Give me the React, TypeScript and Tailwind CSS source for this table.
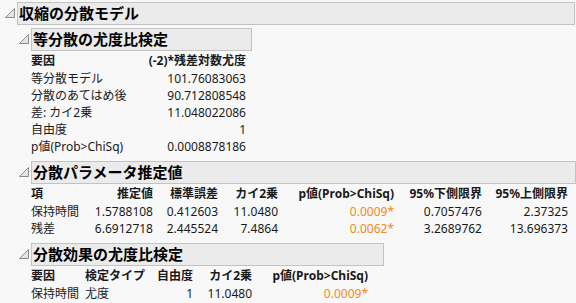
const font = { fontFamily: '"Noto Sans", "Noto Sans CJK JP", sans-serif' }

function Tri() {
  return (
    <svg width="10" height="10" viewBox="0 0 10 10" className="shrink-0 mt-[6px]">
      <polygon points="0.5,9.5 9.5,0.5 9.5,9.5" fill="#e4e4e4" stroke="#8c8c8c" strokeWidth="1" />
    </svg>
  )
}

function Header({ title, w }: { title: string; w: string }) {
  return (
    <div className="flex items-start">
      <div className="w-[13px] pl-[1px]"><Tri /></div>
      <div className={`${w} h-[23px] bg-[#ebebeb] border border-[#c3c3c3] flex items-center pl-[1px] text-[15px] font-bold text-black leading-none`}>
        {title}
      </div>
    </div>
  )
}

const orange = 'text-[#f08a24]'

export default function App() {
  return (
    <div style={font} className="w-[576px] h-[303px] bg-[#f8f8f8] text-[12px] text-[#1a1a1a] overflow-hidden pt-[2px] pl-[4px]">
      <Header title="収縮の分散モデル" w="w-[558px]" />

      <div className="pl-[14px] mt-[3px]">
        <Header title="等分散の尤度比検定" w="w-[221px]" />
        <div className="pl-[13px] pt-[1px] mb-[6px]">
          <div className="grid grid-cols-[100px_115px] leading-none">
            <div className="h-[18px] flex items-center font-bold">要因</div>
            <div className="h-[18px] flex items-center justify-end font-bold">(-2)*残差対数尤度</div>
            {[
              ['等分散モデル', '101.76083063'],
              ['分散のあてはめ後', '90.712808548'],
              ['差: カイ2乗', '11.048022086'],
              ['自由度', '1'],
              ['p値(Prob>ChiSq)', '0.0008878186'],
            ].map(([k, v]) => (
              <>
                <div key={k} className="h-[17px] flex items-center whitespace-nowrap">{k}</div>
                <div key={k + 'v'} className="h-[17px] flex items-center justify-end">{v}</div>
              </>
            ))}
          </div>
        </div>

        <Header title="分散パラメータ推定値" w="w-[545px]" />
        <div className="pl-[13px] pt-[1px] mb-[6px]">
          <div className="grid grid-cols-[58px_64px_65px_60px_116px_88px_86px] leading-none whitespace-nowrap">
            {['項', '推定値', '標準誤差', 'カイ2乗', 'p値(Prob>ChiSq)', '95%下側限界', '95%上側限界'].map((h, i) => (
              <div key={h} className={`h-[18px] flex items-center font-bold ${i ? 'justify-end' : ''}`}>{h}</div>
            ))}
            {[
              ['保持時間', '1.5788108', '0.412603', '11.0480', '0.0009*', '0.7057476', '2.37325'],
              ['残差', '6.6912718', '2.445524', '7.4864', '0.0062*', '3.2689762', '13.696373'],
            ].map(row =>
              row.map((c, i) => (
                <div key={row[0] + i} className={`h-[17px] flex items-center ${i ? 'justify-end' : ''} ${i === 4 ? orange : ''}`}>{c}</div>
              ))
            )}
          </div>
        </div>

        <Header title="分散効果の尤度比検定" w="w-[353px]" />
        <div className="pl-[13px] pt-[1px]">
          <div className="grid grid-cols-[54px_70px_38px_59px_116px] leading-none whitespace-nowrap">
            {['要因', '検定タイプ', '自由度', 'カイ2乗', 'p値(Prob>ChiSq)'].map((h, i) => (
              <div key={h} className={`h-[18px] flex items-center font-bold ${i > 1 ? 'justify-end' : ''}`}>{h}</div>
            ))}
            {['保持時間', '尤度', '1', '11.0480', '0.0009*'].map((c, i) => (
              <div key={i} className={`h-[17px] flex items-center ${i > 1 ? 'justify-end' : ''} ${i === 4 ? orange : ''}`}>{c}</div>
            ))}
          </div>
        </div>
      </div>
    </div>
  )
}
